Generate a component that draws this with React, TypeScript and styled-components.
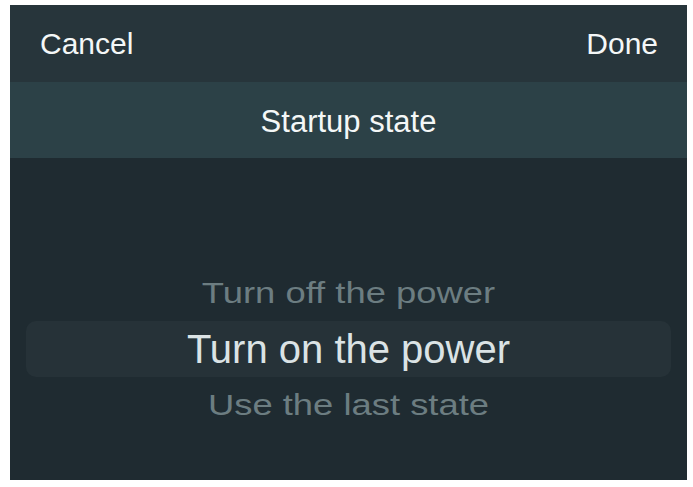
import * as React from "react";
import styled, { createGlobalStyle } from "styled-components";

const GlobalStyle = createGlobalStyle`
  html, body {
    margin: 0;
    padding: 0;
    background: #ffffff;
  }
  body {
    font-family: "Liberation Sans", Arial, sans-serif;
  }
`;

const Frame = styled.div`
  width: 693px;
  height: 487px;
  box-sizing: border-box;
  padding: 5px 6px 7px 10px;
  background: #ffffff;
`;

const Sheet = styled.div`
  height: 100%;
  display: flex;
  flex-direction: column;
  background: #1f2b31;
`;

const Toolbar = styled.div`
  height: 77px;
  flex-shrink: 0;
  display: flex;
  align-items: center;
  justify-content: space-between;
  padding: 0 29px 0 30px;
  background: #27353b;
`;

const ToolButton = styled.button`
  border: 0;
  background: none;
  padding: 0;
  font-family: inherit;
  font-size: 30px;
  color: #f4f7f7;
  cursor: pointer;
`;

const TitleBar = styled.div`
  height: 76px;
  flex-shrink: 0;
  box-sizing: border-box;
  padding-top: 3px;
  display: flex;
  align-items: center;
  justify-content: center;
  background: #2c4147;
  font-size: 31px;
  color: #f4f7f7;
`;

const Picker = styled.div`
  flex: 1;
  display: flex;
  flex-direction: column;
  padding: 107px 16px 0 16px;
`;

interface RowProps {
  selected?: boolean;
}

const Row = styled.div<RowProps>`
  height: 56px;
  display: flex;
  align-items: center;
  justify-content: center;
  border-radius: 10px;
  background: ${props => (props.selected ? "#263238" : "transparent")};
`;

const Label = styled.span<RowProps>`
  display: inline-block;
  font-size: ${props => (props.selected ? "40px" : "36.4px")};
  color: ${props => (props.selected ? "#dbe3e5" : "#6c7d81")};
  transform: ${props => (props.selected ? "none" : "scaleY(0.8)")};
  white-space: nowrap;
`;

const options = ["Turn off the power", "Turn on the power", "Use the last state"];

export default function App() {
  const selected = 1;
  return (
    <>
      <GlobalStyle />
      <Frame>
        <Sheet>
          <Toolbar>
            <ToolButton>Cancel</ToolButton>
            <ToolButton>Done</ToolButton>
          </Toolbar>
          <TitleBar>Startup state</TitleBar>
          <Picker>
            {options.map((opt, i) => (
              <Row key={opt} selected={i === selected}>
                <Label selected={i === selected}>{opt}</Label>
              </Row>
            ))}
          </Picker>
        </Sheet>
      </Frame>
    </>
  );
}
